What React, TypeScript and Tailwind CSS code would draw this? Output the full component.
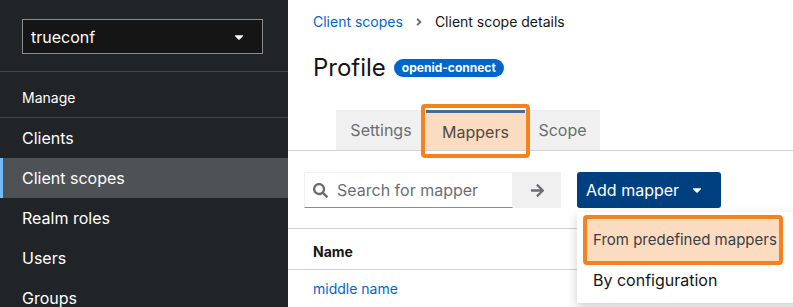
import { FaAngleRight, FaArrowRight, FaCaretDown, FaSearch } from 'react-icons/fa';

const navItems = ['Clients', 'Client scopes', 'Realm roles', 'Users', 'Groups'];

function Sidebar() {
  return (
    <aside className="flex h-[307px] w-[288px] shrink-0 flex-col overflow-hidden bg-[#212427] text-white">
      <div className="px-[22px] pt-[19px] pb-[17px]">
        <div className="flex h-[35px] w-[241px] items-center justify-between border border-[#8a8d90] bg-[#151515] pl-[8px] pr-[16px]">
          <span className="text-base">trueconf</span>
          <FaCaretDown className="size-[14px]" />
        </div>
      </div>
      <div className="border-t border-[#45474a] px-[22px] pt-[16px] pb-[9px] text-sm leading-5">Manage</div>
      <nav className="border-t border-[#45474a]">
        {navItems.map(item => {
          const active = item === 'Client scopes';
          return (
            <div
              key={item}
              className={`flex h-[40px] items-center text-base ${
                active ? 'border-l-[3px] border-[#73bcf7] bg-[#4f5255] pl-[19px]' : 'pl-[22px]'
              }`}>
              {item}
            </div>
          );
        })}
      </nav>
    </aside>
  );
}

function Tabs() {
  return (
    <div className="mt-[27px] flex h-[41px] border-b border-[#d2d2d2] pl-[48px] text-base">
      <div className="flex h-[40px] w-[90px] items-center justify-center bg-[#f0f0f0] text-[#6a6e73]">Settings</div>
      <div className="relative flex h-[40px] w-[99px] items-center justify-center border-t-[3px] border-[#4a6b94] bg-[#fbdcc1] text-[#4f4a45]">
        Mappers
        <div className="absolute -top-[9px] -bottom-[8px] -left-[5px] -right-[5px] rounded-[4px] border-[4px] border-[#f5821f]" />
      </div>
      <div className="flex h-[40px] w-[75px] items-center justify-center bg-[#f0f0f0] text-[#6a6e73]">Scope</div>
    </div>
  );
}

function Toolbar() {
  return (
    <div className="mt-[21px] flex items-center px-[16px]">
      <div className="flex h-[36px] w-[209px] items-center gap-[9px] border border-b-[#8a8d90] border-[#f0f0f0] pl-[8px]">
        <FaSearch className="size-[15px] text-[#6a6e73]" />
        <span className="text-base text-[#6a6e73]">Search for mapper</span>
      </div>
      <div className="flex h-[36px] w-[48px] items-center justify-center bg-[#f0f0f0] text-[#6a6e73]">
        <FaArrowRight className="size-[15px]" />
      </div>
      <div className="ml-[16px] flex h-[36px] w-[144px] items-center justify-between rounded-[3px] bg-[#004080] pl-[9px] pr-[17px] text-base text-white">
        Add mapper
        <FaCaretDown className="size-[14px]" />
      </div>
    </div>
  );
}

function MapperMenu() {
  return (
    <div className="absolute left-[289px] top-[212px] w-[230px] bg-white pt-[3px] pb-[8px] pl-[6px] shadow-[0_4px_10px_rgba(3,3,3,0.2)]">
      <div className="flex h-[50px] w-[200px] items-center whitespace-nowrap rounded-[4px] border-[4px] border-[#f5821f] bg-[#fbdcc1] pl-[6px] text-[15px] text-[#3c3f42]">
        From predefined mappers
      </div>
      <div className="flex h-[30px] items-center pl-[10px] text-base text-[#151515]">By configuration</div>
    </div>
  );
}

export default function App() {
  return (
    <div className="flex h-[307px] w-[793px] overflow-hidden bg-white font-['Inter',sans-serif]">
      <Sidebar />
      <main className="relative flex-1 overflow-hidden">
        <div className="flex items-center gap-[10px] px-[25px] pt-3 text-sm leading-5">
          <span className="text-[#0066cc]">Client scopes</span>
          <FaAngleRight className="size-[12px] text-[#6a6e73]" />
          <span className="text-[#151515]">Client scope details</span>
        </div>
        <div className="mt-[21px] flex items-center gap-[8px] px-[25px]">
          <h1 className="text-2xl leading-[30px] text-[#151515]">Profile</h1>
          <span className="rounded-full bg-[#0066cc] px-[8px] text-xs font-bold leading-[18px] text-white">openid-connect</span>
        </div>
        <Tabs />
        <Toolbar />
        <div className="mt-[20px] border-t border-[#d2d2d2]">
          <div className="flex h-[41px] items-center border-b border-[#d2d2d2] px-[25px] pt-[5px] text-sm font-bold text-[#151515]">Name</div>
          <div className="flex h-[38px] items-center px-[25px] text-sm text-[#0066cc]">middle name</div>
        </div>
        <MapperMenu />
      </main>
    </div>
  );
}
